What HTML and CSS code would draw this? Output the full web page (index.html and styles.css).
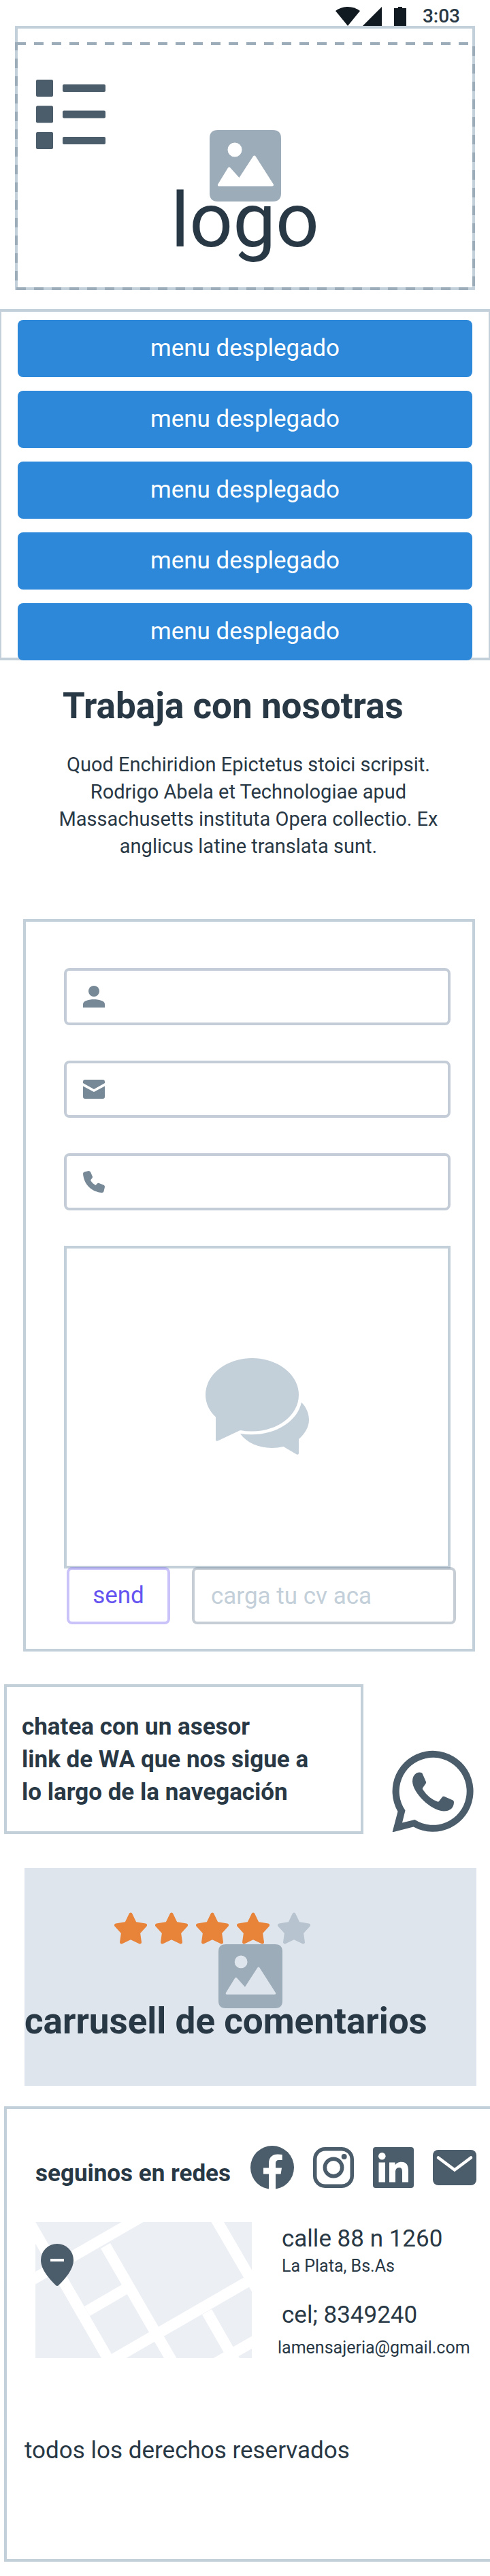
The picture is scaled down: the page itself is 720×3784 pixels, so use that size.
FILE: index.html
```
<!DOCTYPE html>
<html lang="es">
<head>
<meta charset="utf-8">
<meta name="viewport" content="width=device-width, initial-scale=1">
<title>Trabaja con nosotras</title>
<link rel="stylesheet" href="styles.css">
</head>
<body>
<svg class="defs" aria-hidden="true">
  <symbol id="picture" viewBox="0 0 105 105">
    <path fill-rule="evenodd" d="M12 0H93Q105 0 105 12V93Q105 105 93 105H12Q0 105 0 93V12Q0 0 12 0ZM37 18.500a10.500 10.500 0 1 0 0 21a10.500 10.500 0 1 0 0-21ZM27 55.500L12 80Q11.500 82.500 13.500 82.500H92Q94.500 82.500 94 80L67.500 38.500Q66 36.500 64 38.500L43.500 70L30.500 55.500Q29 53.500 27 55.500Z"/>
  </symbol>
  <symbol id="star" viewBox="0 0 48 47">
    <path stroke="currentColor" stroke-width="5" stroke-linejoin="round" d="M24 3L30.500 16.500L45.500 19L35.500 30L37.500 44L24 37.500L10.500 44L12.500 30L2.500 19L17.500 16.500Z"/>
  </symbol>
</svg>

<div class="status">
  <svg class="status-wifi" viewBox="0 0 36 28" aria-hidden="true"><path d="M0 6C10-2 26-2 36 6L18 28Z"/></svg>
  <svg class="status-signal" viewBox="0 0 28 28" aria-hidden="true"><path d="M28 0V28H0Z"/></svg>
  <svg class="status-battery" viewBox="0 0 18 28" aria-hidden="true"><path d="M6 0H12V2H18V28H0V2H6Z"/></svg>
  <span class="status-time">3:03</span>
</div>

<header class="header">
  <svg class="header-dashes" aria-hidden="true"><rect class="header-dash" x="2" y="2"/></svg>
  <button class="menu-toggle" type="button" aria-label="Menu">
    <svg viewBox="0 0 102 102" aria-hidden="true">
      <rect width="25" height="25" rx="2"/><rect x="39" y="7" width="63" height="11" rx="2"/>
      <rect y="38.500" width="25" height="25" rx="2"/><rect x="39" y="45.500" width="63" height="11" rx="2"/>
      <rect y="77" width="25" height="25" rx="2"/><rect x="39" y="84" width="63" height="11" rx="2"/>
    </svg>
  </button>
  <div class="brand">
    <svg class="brand-picture" aria-hidden="true"><use href="#picture"/></svg>
    <span class="brand-name">logo</span>
  </div>
</header>

<nav class="menu">
  <a class="menu-item" href="#">menu desplegado</a>
  <a class="menu-item" href="#">menu desplegado</a>
  <a class="menu-item" href="#">menu desplegado</a>
  <a class="menu-item" href="#">menu desplegado</a>
  <a class="menu-item" href="#">menu desplegado</a>
</nav>

<main>
  <section class="intro">
    <h1 class="heading">Trabaja con nosotras</h1>
    <p class="intro-text">Quod Enchiridion Epictetus stoici scripsit. Rodrigo Abela et Technologiae apud Massachusetts instituta Opera collectio. Ex anglicus latine translata sunt.</p>
  </section>

  <form class="form">
    <label class="field">
      <svg class="field-icon" viewBox="0 0 32 32" aria-hidden="true"><circle cx="16" cy="8" r="8"/><path d="M0 32V27C0 22 9 20 16 20S32 22 32 27V32Z"/></svg>
      <input class="field-input" type="text" aria-label="Nombre">
    </label>
    <label class="field">
      <svg class="field-icon" viewBox="0 0 32 32" aria-hidden="true"><path d="M0 7V5Q0 2 3 2H29Q32 2 32 5V7L16 16ZM0 11.500L16 20L32 11.500V27Q32 30 29 30H3Q0 30 0 27Z"/></svg>
      <input class="field-input" type="email" aria-label="Email">
    </label>
    <label class="field">
      <svg class="field-icon" viewBox="0 0 32 32" aria-hidden="true"><path d="M2 1.500L8 0Q10 0 11 1.500L14 8.500Q14 10 13.500 10.500L11 13.500Q13.500 18.500 18.500 21L21 18.500Q22 17.500 23.500 18L31 21Q32 22 32 23.500L30.500 30Q30 32 28 32C12.500 31 1 19.500 0 4Q0 2 2 1.500Z"/></svg>
      <input class="field-input" type="tel" aria-label="Teléfono">
    </label>
    <label class="message">
      <svg class="message-icon" viewBox="0 0 152 142" aria-hidden="true">
        <path d="M15 86.500C6 78 0 67 0 54C0 24 31 0 68.500 0S137 24 137 54S106 107.500 68.500 107.500Q59 107.500 51 106L18 121.500Q15 122.500 15 120Z"/>
        <path d="M141 65C148 72 152 81 152 91C152 101 146 111 137 119V140Q136.500 142.500 134 141.500L114.500 130C89 136 63 128 51 111C94 118 134 97 141 65Z"/>
      </svg>
      <textarea class="message-input" aria-label="Mensaje"></textarea>
    </label>
    <div class="actions">
      <button class="send" type="button">send</button>
      <input class="upload" type="text" placeholder="carga tu cv aca" aria-label="carga tu cv aca">
    </div>
  </form>

  <section class="chat">
    <p class="chat-text">chatea con un asesor<br>link de WA que nos sigue a<br>lo largo de la navegación</p>
    <a class="chat-link" href="#" aria-label="WhatsApp">
      <svg viewBox="0 0 120 120" aria-hidden="true">
        <path fill-rule="evenodd" d="M8.500 90A59.500 59.500 0 1 1 31.500 112.500L0.500 120.500ZM19.500 88.500L15 106.500L33.500 102A49.500 49.500 0 1 0 19.500 88.500Z"/>
        <path d="M36 33.500C39 32 42 32.500 43.500 33Q44.500 33.500 45 35L50 46.500Q50.500 48 49.500 49L45 55.500Q44.500 56.500 45.500 58Q54 71 67 75.500Q68 76 69 75L74 68.500Q75 67.500 77 68L89.500 73.500Q91 74.500 91 76C91 85 85 89.500 76 89.500C56 88 31 63 30 46Q30 37.500 36 33.500Z"/>
      </svg>
    </a>
  </section>

  <section class="carousel">
    <div class="stars" role="img" aria-label="4 de 5">
      <svg class="star"><use href="#star"/></svg>
      <svg class="star"><use href="#star"/></svg>
      <svg class="star"><use href="#star"/></svg>
      <svg class="star"><use href="#star"/></svg>
      <svg class="star star-off"><use href="#star"/></svg>
    </div>
    <svg class="carousel-picture" aria-hidden="true"><use href="#picture"/></svg>
    <h2 class="heading carousel-title">carrusell de comentarios</h2>
  </section>
</main>

<footer class="footer">
  <div class="social">
    <h3 class="social-title">seguinos en redes</h3>
    <a class="social-link" href="#" aria-label="Facebook">
      <svg width="64" height="64" viewBox="0 0 64 64" aria-hidden="true"><circle cx="32" cy="32" r="32"/><path class="cutout" d="M27 65V41.500H19V32.500H27V26C27 17 32 12.500 40 12.500L46.700 13V21H42C38.500 21 37 23 37 26V32.500H46L44.600 41.500H37V65Z"/></svg>
    </a>
    <a class="social-link" href="#" aria-label="Instagram">
      <svg width="60" height="60" viewBox="0 0 60 60" aria-hidden="true"><rect class="outline" x="2.750" y="2.750" width="54.500" height="54.500" rx="15"/><circle class="outline" cx="30" cy="30" r="12.700"/><circle cx="45.700" cy="14" r="4"/></svg>
    </a>
    <a class="social-link" href="#" aria-label="LinkedIn">
      <svg width="60" height="60" viewBox="0 0 60 60" aria-hidden="true"><rect width="60" height="60" rx="4"/><g class="cutout"><circle cx="13.300" cy="13.300" r="5.300"/><rect x="8.500" y="22.500" width="9.500" height="29"/><path d="M24 22.500H32.600V26.500C34 24 37.500 21.800 41.500 21.800C50 21.800 52 27.500 52 35V51.500H43V37C43 33 42.500 30 38.500 30C34.500 30 33 33 33 37V51.500H24Z"/></g></svg>
    </a>
    <a class="social-link" href="#" aria-label="Correo">
      <svg width="64" height="52" viewBox="0 0 64 52" aria-hidden="true"><rect width="64" height="52" rx="8"/><path class="flap" d="M8 11.500L32 29.500L56 11.500"/></svg>
    </a>
  </div>

  <div class="contact">
    <svg class="map" viewBox="0 0 318 200" role="img" aria-label="Mapa">
      <rect class="map-land" width="318" height="200"/>
      <path class="map-road" d="M-9 0L112 210M-10 88L160-10M103 35L204 210M76 131L131 99M100 210L330 77M262-10L330 107M252 132L296 209M330 170L262 209"/>
      <path class="map-pin" d="M32 32A24 24 0 0 1 56 56C56 70 43 84 34 93Q32 95 30 93C21 84 8 70 8 56A24 24 0 0 1 32 32Z"/>
      <rect class="cutout" x="22" y="54" width="20" height="4"/>
    </svg>
    <address class="address">
      <span class="line">calle 88 n 1260</span>
      <span class="small">La Plata, Bs.As</span>
      <span class="line phone">cel; 8349240</span>
      <a class="email" href="mailto:lamensajeria@gmail.com">lamensajeria@gmail.com</a>
    </address>
  </div>

  <p class="rights">todos los derechos reservados</p>
</footer>
</body>
</html>
```
FILE: styles.css
```
* {
  box-sizing: border-box;
}

body {
  margin: 0;
  padding-bottom: 22px;
  background: #fff;
  color: #293845;
  font-family: Roboto, "Liberation Sans", sans-serif;
  font-size: 35px;
  line-height: 40px;
  overflow-x: hidden;
}

h1, h2, h3, p {
  margin: 0;
}

svg {
  display: block;
  fill: currentColor;
}

a {
  color: inherit;
  text-decoration: none;
}

button, input, textarea {
  font: inherit;
  color: inherit;
  margin: 0;
}

.defs {
  position: absolute;
  width: 0;
  height: 0;
}

.heading {
  font-size: 53px;
  font-weight: 700;
  line-height: 64px;
}

/* Status bar */

.status {
  display: flex;
  justify-content: flex-end;
  align-items: flex-end;
  height: 38px;
  padding-right: 44px;
  color: #111a21;
}

.status-wifi {
  width: 36px;
  height: 28px;
  margin-right: 4px;
}

.status-signal {
  width: 28px;
  height: 28px;
  margin-right: 18px;
}

.status-battery {
  width: 18px;
  height: 28px;
  margin-right: 24px;
}

.status-time {
  color: #293845;
  font-size: 28px;
  font-weight: 500;
  line-height: 28px;
}

/* Header */

.header {
  position: relative;
  display: grid;
  margin: 0 22px;
  padding: 75px 27px 70px;
  border: 4px solid #c3cfd9;
}

.header-dashes {
  position: absolute;
  top: 20px;
  left: -4px;
  width: calc(100% + 8px);
  height: calc(100% - 16px);
}

.header-dash {
  width: calc(100% - 4px);
  height: calc(100% - 4px);
  fill: none;
  stroke: #9dacb9;
  stroke-width: 4;
  stroke-dasharray: 14 12;
}

.menu-toggle {
  grid-area: 1 / 1;
  justify-self: start;
  align-self: start;
  position: relative;
  width: 102px;
  height: 102px;
  padding: 0;
  border: 0;
  background: none;
  color: #4b5c6a;
}

.brand {
  grid-area: 1 / 1;
  display: flex;
  flex-direction: column;
  align-items: center;
  padding-top: 74px;
}

.brand-picture {
  width: 105px;
  height: 105px;
  color: #9dacb9;
}

.brand-name {
  position: relative;
  font-size: 112px;
  line-height: 56px;
}

/* Menu */

.menu {
  display: flex;
  flex-direction: column;
  gap: 20px;
  margin-top: 28px;
  padding: 12px 24px 0;
  border: solid #c3cfd9;
  border-width: 4px 2px;
}

.menu-item {
  height: 84px;
  border-radius: 8px;
  background: #2d88d9;
  color: #fff;
  line-height: 84px;
  text-align: center;
}

.menu-item:last-child {
  margin-bottom: -4px;
}

/* Intro */

.intro {
  padding: 35px 70px 0 80px;
}

.intro .heading {
  padding-left: 12px;
}

.intro-text {
  margin-top: 34px;
  font-size: 29px;
  text-align: center;
}

/* Form */

.form {
  display: flex;
  flex-direction: column;
  gap: 52px;
  margin: 87px 22px 0 34px;
  padding: 68px 32px 36px 56px;
  border: 4px solid #c3cfd9;
}

.field {
  position: relative;
  display: block;
}

.field-icon {
  position: absolute;
  top: 26px;
  left: 28px;
  width: 32px;
  height: 32px;
  color: #778896;
}

.field-input {
  display: block;
  width: 100%;
  height: 84px;
  padding: 0 24px 0 76px;
  border: 4px solid #c4cdd7;
  border-radius: 8px;
  background: none;
}

.message {
  position: relative;
  display: block;
}

.message-icon {
  position: absolute;
  top: 165px;
  left: calc(50% - 76px);
  width: 152px;
  height: 142px;
  color: #c3cfd9;
}

.message-input {
  display: block;
  width: 100%;
  height: 474px;
  padding: 20px;
  border: 4px solid #c3cfd9;
  border-radius: 0;
  background: none;
  resize: none;
}

.actions {
  position: relative;
  display: flex;
  gap: 32px;
  margin: -54px -8px 0 4px;
}

.send {
  width: 152px;
  height: 84px;
  padding: 0;
  border: 4px solid rgba(102, 84, 241, 0.35);
  border-radius: 8px;
  background: none;
  color: #6654f1;
}

.upload {
  flex: 1;
  min-width: 0;
  height: 84px;
  padding: 0 24px;
  border: 4px solid rgba(119, 136, 153, 0.42);
  border-radius: 8px;
  background: none;
}

.upload::placeholder {
  color: #c3cfd9;
  opacity: 1;
}

/* Chat */

.chat {
  display: flex;
  align-items: flex-end;
  gap: 42px;
  margin-top: 48px;
  padding: 0 24px 0 6px;
}

.chat-text {
  flex: 1;
  padding: 35px 20px 33px 22px;
  border: 4px solid #c3cfd9;
  font-weight: 700;
  line-height: 48px;
}

.chat-link {
  width: 120px;
  padding-bottom: 3px;
  color: #4b5c6a;
}

/* Carousel */

.carousel {
  margin: 50px 20px 0 36px;
  padding: 65px 0 76px;
  background: #dfe5ed;
}

.stars {
  display: flex;
  gap: 12px;
  padding-left: 132px;
  color: #e8833a;
}

.star {
  width: 48px;
  height: 47px;
}

.star-off {
  color: #b7c4d0;
}

.carousel-picture {
  width: 94px;
  height: 94px;
  margin: 0 auto;
  color: #9dacb9;
}

.carousel-title {
  line-height: 38px;
}

/* Footer */

.footer {
  margin: 30px 0 0 6px;
  padding: 54px 20px 139px 26px;
  border: 4px solid #c3cfd9;
  border-right: 0;
}

.social {
  display: flex;
  align-items: center;
  gap: 28px;
  padding-left: 16px;
}

.social-title {
  flex: 1;
  align-self: flex-end;
  padding-bottom: 3px;
  font-size: 35px;
  font-weight: 700;
  white-space: nowrap;
  margin-right: -8px;
}

.social-link {
  color: #4b5c6a;
}

.cutout {
  fill: #fff;
}

.outline {
  fill: none;
  stroke: currentColor;
  stroke-width: 5.5;
}

.flap {
  fill: none;
  stroke: #fff;
  stroke-width: 4.5;
  stroke-linecap: round;
}

.contact {
  display: flex;
  gap: 38px;
  margin-top: 48px;
  padding-left: 16px;
}

.map {
  flex: none;
  width: 318px;
  height: 200px;
}

.map-land {
  fill: #eceff4;
}

.map-road {
  fill: none;
  stroke: #fff;
  stroke-width: 16;
}

.map-pin {
  fill: #4b5c6a;
}

.address {
  display: flex;
  flex-direction: column;
  padding-top: 5px;
  font-style: normal;
  white-space: nowrap;
}

.line {
  padding-left: 6px;
}

.small {
  margin-top: 4px;
  padding-left: 6px;
  font-size: 25px;
  line-height: 32px;
}

.phone {
  margin-top: 36px;
}

.email {
  margin-top: 12px;
  font-size: 25px;
  line-height: 32px;
}

.rights {
  margin-top: 115px;
}
```
